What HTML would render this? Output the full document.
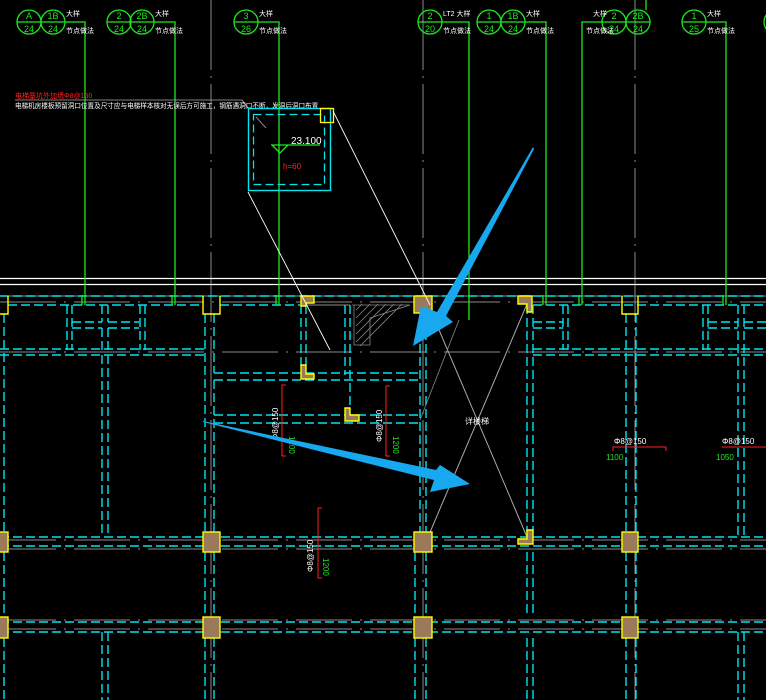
<!DOCTYPE html>
<html><head><meta charset="utf-8"><style>
html,body{margin:0;padding:0;background:#000;width:766px;height:700px;overflow:hidden}
svg{display:block}
text{font-family:"Liberation Sans","Noto Sans CJK SC",sans-serif}
</style></head><body>
<svg width="766" height="700" viewBox="0 0 766 700" xmlns="http://www.w3.org/2000/svg">
<rect width="766" height="700" fill="#000"/>
<!-- gray axis lines -->
<g stroke="#8a8a8a" stroke-width="1" fill="none">
<path d="M211 0V700M423 0V700M635 0V700" stroke-dasharray="70 6 2 6"/>
<path d="M0 296H766"/>
<path d="M0 302H766M0 352H766M0 540H766M0 549H766M0 620H766M0 629H766" stroke-dasharray="56 8 2 8"/>
<path d="M428 304L527 537M527 304L428 537" stroke="#aaa"/>
<path d="M305 305H350" />
</g>
<!-- white double lines -->
<path d="M0 278.5H766M0 284.5H766" stroke="#fff" stroke-width="1.2"/>
<!-- cyan dashed beams -->
<g stroke="#00e5ee" stroke-width="1.4" fill="none" stroke-dasharray="9 4">
<path d="M0 296H766M8 305H202M220 305H300M533 305H766"/>
<path d="M4 314V538M4 552V618M4 638V700"/>
<path d="M102 305V322M108 305V322M102 328V350M108 328V350M102 355V537M108 355V537M102 632V700M108 632V700"/>
<path d="M67 305V350M72 305V350M140 305V350M145 305V350M72 322H102M108 322H139M72 328H102M108 328H139"/>
<path d="M0 349H205M0 355H205"/>
<path d="M205 314V532M214 314V373M214 380V532M205 552V617M214 552V617M205 638V700M214 638V700"/>
<path d="M214 373H420M214 380H420M214 415H420M214 423H420"/>
<path d="M420 305V532M426 305V532M415 552V617M426 552V617M415 638V700M426 638V700"/>
<path d="M527 305V532M533 305V532M527 552V617M533 552V617M527 638V700M533 638V700"/>
<path d="M626 314V532M636 314V532M626 552V617M636 552V617M626 638V700M636 638V700"/>
<path d="M533 322H563M533 328H563M563 305V350M568 305V350M533 349H766M533 355H766"/>
<path d="M703 305V350M708 305V350M708 322H738M708 328H738M738 305V537M744 305V537M738 632V700M744 632V700M744 322H766M744 328H766"/>
<path d="M0 537H766M0 546H766M0 622H766M0 632H766"/>
<path d="M301 305V370M306 305V365M345 305V375M350 305V410"/>
</g>
<!-- columns -->
<g stroke="#ffff00" stroke-width="1.4">
<rect x="-2" y="532" width="10" height="20" fill="#9a7a58"/>
<rect x="203" y="532" width="17" height="20" fill="#9a7a58"/>
<rect x="414" y="532" width="18" height="20" fill="#9a7a58"/>
<rect x="622" y="532" width="16" height="20" fill="#9a7a58"/>
<rect x="-2" y="617" width="10" height="21" fill="#9a7a58"/>
<rect x="203" y="617" width="17" height="21" fill="#9a7a58"/>
<rect x="414" y="617" width="18" height="21" fill="#9a7a58"/>
<rect x="622" y="617" width="16" height="21" fill="#9a7a58"/>
<path d="M-2 314H8V296M203 296V314H220V296M622 296V314H638V296" fill="none"/>
<rect x="414" y="296" width="18" height="17" fill="#9a7a58"/>
<path d="M518 296H532V312H527V304H518Z" fill="#9a7a58"/>
<path d="M301 296H314V303H306V306H301Z" fill="#9a7a58"/>
<path d="M301 365H306V374H314V379H301Z" fill="#9a7a58"/>
<path d="M345 408H350V415H359V421H345Z" fill="#9a7a58"/>
<path d="M527 530H533V544H518V539H527Z" fill="#9a7a58"/>
</g>
<!-- hatch -->
<g stroke="#888" stroke-width="0.8">
<path d="M352 305H410L370 318V345H354V305"/>
<path d="M356 310L362 304M356 318L370 304M356 326L378 304M356 334L386 304M356 342L394 304M360 346L402 304"/>
</g>
<!-- green leaders -->
<g stroke="#1ee81e" stroke-width="1.3" fill="none">
<circle cx="29" cy="22" r="12"/><circle cx="53" cy="22" r="12"/>
<circle cx="119" cy="22" r="12"/><circle cx="142" cy="22" r="12"/>
<circle cx="246" cy="22" r="12"/>
<circle cx="430" cy="22" r="12"/>
<circle cx="489" cy="22" r="12"/><circle cx="513" cy="22" r="12"/>
<circle cx="614" cy="22" r="12"/><circle cx="638" cy="22" r="12"/>
<circle cx="694" cy="22" r="12"/><circle cx="776" cy="22" r="12"/>
<path d="M17 22H85V305M107 22H175V305M234 22H279V305M418 22H469V320M477 22H546V305M582 305V22H650M682 22H726V305"/>
<path d="M82 295V305M172 295V305M276 295V305M543 295V305M579 295V305M723 295V305M646 0V10"/>
<path d="M271 145H320M272 145L280 153L288 145"/>
</g>
<g fill="#1ee81e" font-size="9" text-anchor="middle">
<text x="29" y="19">A</text><text x="29" y="32">24</text>
<text x="53" y="19">1B</text><text x="53" y="32">24</text>
<text x="119" y="19">2</text><text x="119" y="32">24</text>
<text x="142" y="19">2B</text><text x="142" y="32">24</text>
<text x="246" y="19">3</text><text x="246" y="32">26</text>
<text x="430" y="19">2</text><text x="430" y="32">20</text>
<text x="489" y="19">1</text><text x="489" y="32">24</text>
<text x="513" y="19">1B</text><text x="513" y="32">24</text>
<text x="614" y="19">2</text><text x="614" y="32">24</text>
<text x="638" y="19">2B</text><text x="638" y="32">24</text>
<text x="694" y="19">1</text><text x="694" y="32">25</text>
</g>
<g fill="#fff" font-size="7">
<text x="66" y="16">大样</text><text x="66" y="33">节点做法</text>
<text x="155" y="16">大样</text><text x="155" y="33">节点做法</text>
<text x="259" y="16">大样</text><text x="259" y="33">节点做法</text>
<text x="443" y="16">LT2 大样</text><text x="443" y="33">节点做法</text>
<text x="526" y="16">大样</text><text x="526" y="33">节点做法</text>
<text x="593" y="16">大样</text><text x="586" y="33">节点做法</text>
<text x="707" y="16">大样</text><text x="707" y="33">节点做法</text>
</g>
<!-- notes -->
<text x="15" y="98" fill="#ff2020" font-size="7">电梯基坑外加墙Φ8@150</text>
<path d="M15 100H242L248 108" stroke="#aaa" stroke-width="0.8" fill="none"/>
<text x="15" y="108" fill="#fff" font-size="6.6">电梯机房楼板预留洞口位置及尺寸应与电梯样本核对无误后方可施工，钢筋遇洞口不断，发洞后洞口布置</text>
<!-- elevator pit box -->
<rect x="248.5" y="108.5" width="82" height="82" fill="none" stroke="#00e5ee" stroke-width="1.4"/>
<rect x="253.5" y="114.5" width="71" height="70" fill="none" stroke="#00e5ee" stroke-width="1.3" stroke-dasharray="8 4"/>
<rect x="320.5" y="108.5" width="13" height="14" fill="none" stroke="#ffff00" stroke-width="1.3"/>
<path d="M256 117L266 128" stroke="#aaa" stroke-width="0.8"/>
<text x="291" y="144" fill="#fff" font-size="10">23.100</text>
<text x="283" y="169" fill="#ff2020" font-size="8">h=60</text>
<path d="M248 192L330 350M333 111L430 305" stroke="#fff" stroke-width="0.9"/>
<path d="M459 320L420 420" stroke="#888" stroke-width="0.8"/>
<!-- dimension annotations -->
<g stroke="#ff2020" stroke-width="1" fill="none">
<path d="M286 385H282V456H286M390 386H386V456H390M322 508H318V578H322M613 451V447H666V451M722 447H766"/>
</g>
<g fill="#fff" font-size="8">
<text transform="translate(278 440) rotate(-90)">Φ8@150</text>
<text transform="translate(382 442) rotate(-90)">Φ8@150</text>
<text transform="translate(313 572) rotate(-90)">Φ8@150</text>
<text x="614" y="444">Φ8@150</text>
<text x="722" y="444">Φ8@150</text>
<text x="465" y="424">详楼梯</text>
</g>
<g fill="#1ee81e" font-size="8">
<text transform="translate(289 436) rotate(90)">1200</text>
<text transform="translate(393 436) rotate(90)">1200</text>
<text transform="translate(323 558) rotate(90)">1200</text>
<text x="606" y="460">1100</text>
<text x="716" y="460">1050</text>
</g>
<!-- blue arrows -->
<g fill="#18a8f0">
<polygon points="533,147 534,149 446,316 453,322 413,346 421,306 437,312"/>
<polygon points="203,421 203,422 434,480 430,492 470,484 440,465 436,470"/>
</g>
</svg>
</body></html>
